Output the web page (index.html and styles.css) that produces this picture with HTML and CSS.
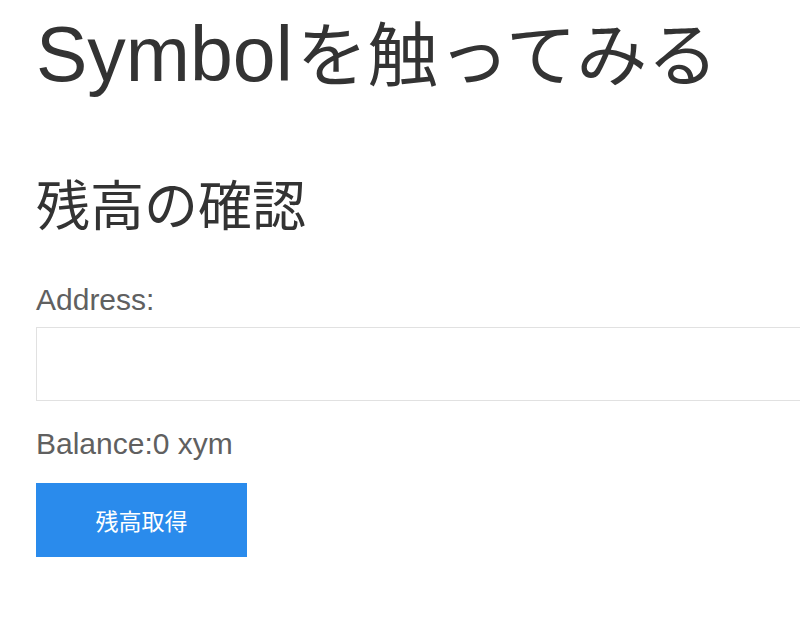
FILE: index.html
```html
<!DOCTYPE html>
<html lang="ja">
<head>
    <meta charset="UTF-8">
    <meta name="viewport" content="width=device-width, initial-scale=1.0">
    <title>Symbolを触ってみる</title>
    <link rel="stylesheet" href="styles.css">
</head>
<body>
    <div class="container">
        <h1>Symbol<span class="ja">を触ってみる</span></h1>
        <h2>残高の確認</h2>
        <label for="address">Address:</label>
        <input type="text" id="address">
        <p class="balance">Balance:<span id="balance">0</span> xym</p>
        <button onclick="getBalance()">残高取得</button>
    </div>
    <script>
        function getBalance() {
            document.getElementById('balance').textContent = '0';
        }
    </script>
</body>
</html>
```

FILE: styles.css
```css
body {
    margin: 0;
    font-family: "Liberation Sans", Arial, "Noto Sans CJK JP", sans-serif;
    color: #606060;
    background: #fff;
}
.container {
    padding: 0 0 0 36px;
    overflow: hidden;
}
h1 {
    font-size: 77px;
    font-weight: normal;
    color: #333;
    margin: 8px 0 0;
    line-height: 1.2;
}
h1 .ja {
    font-size: 0.92em;
    margin-left: 4px;
}
h2 {
    font-size: 54px;
    font-weight: normal;
    color: #333;
    margin: 75px 0 0;
    line-height: 1.2;
}
label {
    display: block;
    font-size: 30px;
    margin-top: 39px;
    line-height: 1.4;
}
input {
    display: block;
    width: 900px;
    height: 74px;
    box-sizing: border-box;
    border: 1.5px solid #e1e1e1;
    margin: 6px 0 0;
    font-size: 24px;
    padding: 0 14px;
}
.balance {
    font-size: 30px;
    margin: 22px 0 0;
    line-height: 1.4;
}
button {
    display: block;
    width: 211px;
    height: 74px;
    margin-top: 18px;
    border: none;
    background: #2a8bec;
    color: #fff;
    font-size: 23px;
    font-family: "Noto Sans CJK JP", sans-serif;
    cursor: pointer;
}
```
